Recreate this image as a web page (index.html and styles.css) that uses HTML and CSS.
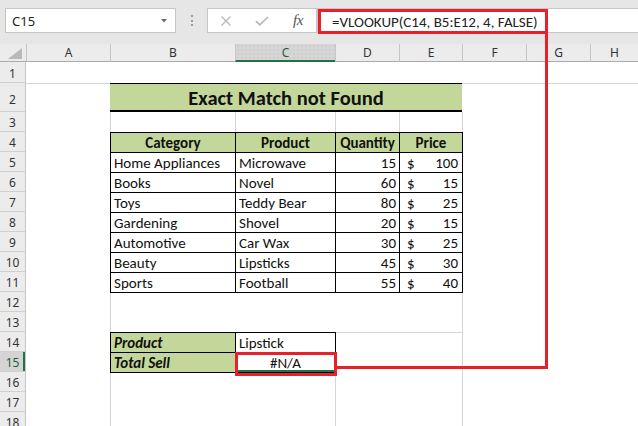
FILE: index.html
```html
<!DOCTYPE html>
<html lang="en">
<head>
<meta charset="utf-8">
<title>VLOOKUP – Exact Match not Found</title>
<link rel="stylesheet" href="styles.css">
</head>
<body>
<div class="app">
  <div class="toolbar">
    <div class="namebox">
      <span class="namebox-text">C15</span>
      <svg class="namebox-arrow" width="6" height="4" viewBox="0 0 6 4"><path d="M0 0H6L3 3.5Z" fill="#6b6b6b"/></svg>
    </div>
    <div class="grip"><span></span><span></span><span></span></div>
    <div class="fxbox">
      <svg class="icon-cancel" width="10" height="10" viewBox="0 0 10 10"><path d="M0.5 0.5L9.5 9.5M9.5 0.5L0.5 9.5" stroke="#b5b5b5" stroke-width="1.2" fill="none"/></svg>
      <svg class="icon-enter" width="14" height="10" viewBox="0 0 14 10"><path d="M1 5.2L4.8 8.8L13 1" stroke="#b5b5b5" stroke-width="1.7" fill="none"/></svg>
      <span class="fx-label">fx</span>
    </div>
    <div class="formula-bar">
      <div class="formula-highlight">=VLOOKUP(C14, B5:E12, 4, FALSE)</div>
    </div>
  </div>

  <div class="colheads">
    <div class="corner"><svg width="26" height="18" viewBox="0 0 26 18"><path d="M8 15H22V4Z" fill="#b9b9b9"/></svg></div>
    <div class="ch col-a">A</div>
    <div class="ch col-b">B</div>
    <div class="ch col-c ch-sel">C</div>
    <div class="ch col-d">D</div>
    <div class="ch col-e">E</div>
    <div class="ch col-f">F</div>
    <div class="ch col-g">G</div>
    <div class="ch col-h">H</div>
  </div>

  <div class="body">
    <div class="rowheads">
      <div class="rh rh-1">1</div>
      <div class="rh rh-2">2</div>
      <div class="rh">3</div>
      <div class="rh">4</div>
      <div class="rh">5</div>
      <div class="rh">6</div>
      <div class="rh">7</div>
      <div class="rh">8</div>
      <div class="rh">9</div>
      <div class="rh">10</div>
      <div class="rh">11</div>
      <div class="rh">12</div>
      <div class="rh">13</div>
      <div class="rh">14</div>
      <div class="rh rh-sel">15</div>
      <div class="rh">16</div>
      <div class="rh">17</div>
      <div class="rh">18</div>
    </div>

    <div class="cells">
      <div class="gl-row1"></div>
      <div class="title">Exact Match not Found</div>
      <div class="gl-row3"><span class="w-b"></span><span class="w-c"></span><span class="w-d"></span><span class="w-e"></span></div>
      <div class="gl-col-f"></div>
      <div class="gl-col-b"></div>
      <div class="gl-col-d"></div>

      <div class="data-table">
        <div class="cell th">Category</div><div class="cell th">Product</div><div class="cell th">Quantity</div><div class="cell th">Price</div>
        <div class="cell">Home Appliances</div><div class="cell">Microwave</div><div class="cell num">15</div><div class="cell money"><span>$</span><span>100</span></div>
        <div class="cell">Books</div><div class="cell">Novel</div><div class="cell num">60</div><div class="cell money"><span>$</span><span>15</span></div>
        <div class="cell">Toys</div><div class="cell">Teddy Bear</div><div class="cell num">80</div><div class="cell money"><span>$</span><span>25</span></div>
        <div class="cell">Gardening</div><div class="cell">Shovel</div><div class="cell num">20</div><div class="cell money"><span>$</span><span>15</span></div>
        <div class="cell">Automotive</div><div class="cell">Car Wax</div><div class="cell num">30</div><div class="cell money"><span>$</span><span>25</span></div>
        <div class="cell">Beauty</div><div class="cell">Lipsticks</div><div class="cell num">45</div><div class="cell money"><span>$</span><span>30</span></div>
        <div class="cell">Sports</div><div class="cell">Football</div><div class="cell num">55</div><div class="cell money"><span>$</span><span>40</span></div>
      </div>

      <div class="lookup-table">
        <div class="cell lk-label">Product</div><div class="cell">Lipstick</div>
        <div class="cell lk-label">Total Sell</div><div class="cell result">#N/A</div>
      </div>
    </div>
  </div>

  <svg class="connector" width="638" height="426" viewBox="0 0 638 426"><path d="M546.5 34V367.5H337" stroke="#e8202a" stroke-width="3" fill="none"/></svg>
</div>
</body>
</html>
```

FILE: styles.css
```css
* { box-sizing: border-box; }
html, body { margin: 0; padding: 0; }
body { background: #fff; font-family: "Noto Sans", "DejaVu Sans", sans-serif; }

.app { position: relative; width: 638px; height: 426px; overflow: hidden; background: #fff; }

/* ---------- formula toolbar ---------- */
.toolbar { display: flex; align-items: flex-start; height: 44px; padding: 8px 0 0 5px; background: #e6e6e6; }
.namebox { display: flex; align-items: center; justify-content: space-between; width: 171px; height: 25px; padding: 0 8px 0 6px; background: #fff; border: 1px solid #c6c6c6; font-size: 13px; color: #222; }
.namebox-arrow { display: block; }
.grip { display: flex; flex-direction: column; align-items: center; justify-content: center; gap: 2.5px; width: 31px; height: 25px; }
.grip span { width: 2px; height: 2px; background: #9c9c9c; }
.fxbox { display: flex; align-items: center; gap: 24px; width: 110px; height: 25px; padding-left: 13px; background: #fff; border: 1px solid #c6c6c6; }
.fxbox svg { display: block; }
.fx-label { font-family: "Liberation Serif", "DejaVu Serif", serif; font-style: italic; font-size: 15px; color: #555; letter-spacing: -0.5px; }
.formula-bar { flex: 1; height: 25px; background: #fff; border: 1px solid #c6c6c6; border-right: none; }
.formula-highlight { display: flex; align-items: center; width: 230px; height: 25px; padding-left: 11px; border: 3px solid #e8202a; white-space: nowrap; font-family: "Carlito", "Calibri", "Lato", sans-serif; font-size: 15px; color: #222; }

/* ---------- column headers ---------- */
.colheads { display: flex; height: 18px; background: #ececec; }
.corner { width: 26px; flex: none; border-bottom: 1px solid #ababab; }
.corner svg { display: block; }
.ch { display: flex; align-items: center; justify-content: center; flex: none; border-left: 1px solid #c6c6c6; border-bottom: 1px solid #ababab; font-size: 12px; color: #333; }
.col-a { width: 84px; }
.col-b { width: 125px; }
.col-c { width: 100px; }
.col-d { width: 64px; }
.col-e { width: 63px; }
.col-f { width: 64px; }
.col-g { width: 64px; }
.col-h { flex: 1; }
.ch-sel { background-color: #d6d6d6; background-image: radial-gradient(circle, #c6c6c6 0.6px, transparent 0.8px); background-size: 4px 4px; border-bottom: 2px solid #217346; color: #21603a; }

/* ---------- body ---------- */
.body { display: flex; }
.rowheads { width: 26px; flex: none; background: #ececec; border-right: 1px solid #c6c6c6; }
.rh { display: flex; align-items: center; justify-content: center; height: 20px; padding-top: 2px; border-bottom: 1px solid #d0d0d0; font-size: 12px; color: #333; }
.rh-1 { height: 21px; }
.rh-2 { height: 29px; padding-top: 5px; }
.rh-sel { background: #d4d4d4; color: #21603a; box-shadow: inset -2px 0 0 #217346; }

.cells { flex: 1; display: grid; grid-template-columns: 84px 125px 100px 64px 63px 64px 64px 1fr; grid-template-rows: 21px 29px repeat(16, 20px); }

.gl-row1 { grid-row: 1; grid-column: 1 / -1; box-shadow: 0 1px 0 #d6d6d6; }
.title { grid-row: 2; grid-column: 2 / 6; display: flex; align-items: center; justify-content: center; padding-top: 1px; background: #c4d79b; border-top: 1px solid #000; border-bottom: 2px solid #000; font-family: "Carlito", "Calibri", "Lato", sans-serif; font-weight: bold; font-size: 20.5px; color: #111; }
.gl-row3 { grid-row: 3; grid-column: 2 / 6; display: flex; }
.gl-row3 span { border-left: 1px solid #d6d6d6; }
.w-b { width: 125px; }
.w-c { width: 100px; }
.w-d { width: 64px; }
.w-e { width: 63px; }
.gl-col-f { grid-row: 3 / -1; grid-column: 6 / -1; border-left: 1px solid #d6d6d6; }
.gl-col-b { grid-row: 12 / -1; grid-column: 2; border-left: 1px solid #d6d6d6; }
.gl-col-d { grid-row: 14 / -1; grid-column: 4 / 6; border-left: 1px solid #d6d6d6; border-top: 1px solid #d6d6d6; }

.data-table { grid-row: 4 / span 8; grid-column: 2 / span 4; align-self: start; justify-self: start; display: grid; grid-template-columns: 124px 99px 63px 62px; grid-auto-rows: 19px; gap: 1px; width: 353px; height: 161px; padding: 1px; background: #000; }
.lookup-table { grid-row: 14 / span 2; grid-column: 2 / span 2; align-self: start; justify-self: start; display: grid; grid-template-columns: 124px 99px; grid-auto-rows: 19px; gap: 1px; width: 226px; height: 41px; padding: 1px; background: #000; }

.cell { display: flex; align-items: center; padding: 1px 3px 0; background: #fff; white-space: nowrap; font-family: "Carlito", "Calibri", "Lato", sans-serif; font-size: 15px; color: #111; }
.th { justify-content: center; background: #c4d79b; font-weight: bold; }
.num { justify-content: flex-end; padding-right: 3px; }
.money { justify-content: space-between; padding-left: 7px; padding-right: 4px; }
.lk-label { background: #c4d79b; font-weight: bold; font-style: italic; }
.result { position: relative; justify-content: center; box-shadow: inset 0 -2px 0 #217346; }
.result::after { content: ""; position: absolute; left: -1px; top: -1px; right: -2px; bottom: -4px; border: 3px solid #e8202a; }

.connector { position: absolute; left: 0; top: 0; pointer-events: none; }
```
